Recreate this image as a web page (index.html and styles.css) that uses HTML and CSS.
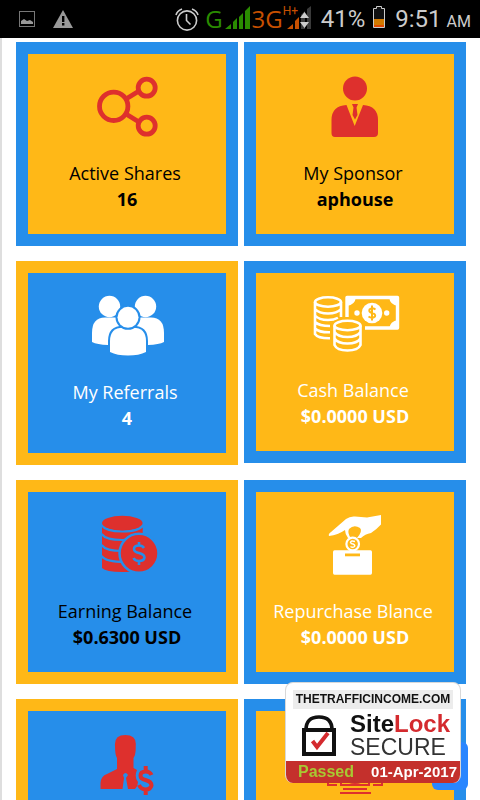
FILE: index.html
```html
<!DOCTYPE html>
<html lang="en">
	<head>
		<meta charset="UTF-8" />
		<meta name="viewport" content="width=device-width, initial-scale=1.0" />
		<title>Dashboard</title>
		<link rel="stylesheet" href="styles.css">
	</head>
	<body>
		<header class="status">
			<div class="status-left">
				<svg width="16" height="16" viewBox="0 0 16 16">
					<rect x="0.5" y="0.5" width="15" height="15" fill="none" stroke="#777" />
					<path d="M2 13V10L5 8L8 10L11 9L14 11V13Z" fill="#999" />
				</svg>
				<svg width="20" height="18" viewBox="0 0 20 18">
					<path d="M10 0L20 18H0Z" fill="#999" />
					<path d="M9 6h2.4v6H9zM9 13h2.4v2.4H9z" fill="#000" />
				</svg>
			</div>
			<div class="status-right">
				<svg class="alarm" width="24" height="23" viewBox="0 0 24 23" fill="none" stroke="#ccc" stroke-width="1.6">
					<circle cx="12" cy="12.500" r="9.600" />
					<path d="M11.500 6V12.500L15.500 16.500M1 7Q2 3 7 1M23 7Q22 3 17 1" />
				</svg>
				<span class="net green">G</span>
				<svg class="signal" width="25" height="23" viewBox="0 0 25 23" fill="#2a8c00">
					<path d="M0 23L6 18V23ZM8 16L12 12V23H8ZM14 11L18 7V23H14ZM20 5L25 0V23H20Z" />
				</svg>
				<span class="net orange">3G</span>
				<div class="hplus">
					<svg width="28" height="23" viewBox="0 0 28 23">
						<path d="M4 23L10 18V23ZM12 15L16 11V23H12Z" fill="#c85000" />
						<path d="M18 9L22 5V23H18ZM24 3L28 0V23H24Z" fill="#3a3a3a" />
						<path d="M21.500 6L26 12H17ZM17 16H26L21.500 22Z" fill="#ccc" />
					</svg>
					<span class="hplus-text">H+</span>
				</div>
				<span class="percent">41%</span>
				<svg class="battery" width="12" height="22" viewBox="0 0 12 22">
					<path d="M3.500 0.500h5v2h3v19h-11v-19h3z" fill="#111" stroke="#ccc" />
					<rect x="1" y="13" width="10" height="8" fill="#d27a00" />
					<rect x="1" y="19" width="10" height="2" fill="#e04a00" />
				</svg>
				<span class="clock">9:51</span>
				<span class="ampm">AM</span>
			</div>
		</header>

		<main class="page">
			<div class="cards">
				<section class="card gold">
					<svg class="icon" viewBox="0 0 100 62" fill="none" stroke="#de302d" stroke-width="4.800">
						<circle cx="36.700" cy="30.300" r="14.200" />
						<circle cx="69.700" cy="11.700" r="8.500" />
						<circle cx="69.700" cy="49.700" r="8.500" />
						<path d="M49 23L62 15M49 38L62 46" />
					</svg>
					<h2 class="label">Active Shares</h2>
					<p class="value">16</p>
				</section>

				<section class="card gold">
					<svg class="icon" viewBox="0 0 100 62" fill="#de302d">
						<circle cx="50" cy="12.500" r="12" />
						<path d="M41.500 29L49.700 50L58 29Q73 30 73 44V57Q73 61 69 61H30Q26.500 61 26.500 57V44Q26.500 30 41.500 29Z" />
						<path d="M47 28H53L51.500 31.500L52.500 39L50 43.500L47.500 39L48.500 31.500Z" />
					</svg>
					<h2 class="label">My Sponsor</h2>
					<p class="value">aphouse</p>
				</section>

				<section class="card blue light">
					<svg class="icon" viewBox="0 0 100 62" fill="#fff">
						<circle cx="32.500" cy="11.500" r="10.700" />
						<circle cx="68.500" cy="11.500" r="10.700" />
						<path d="M15 47V38Q15 22.500 28 22.500H38Q50 23 50 38V50H31Q20 49.500 15 47Z" />
						<path d="M87 47V38Q87 22.500 74 22.500H64Q52 23 52 38V50H71Q82 49.500 87 47Z" />
						<g stroke="#268eea" stroke-width="4" paint-order="stroke">
							<path d="M33 57V46Q33 32.700 46 32.700H56Q69 32.700 69 46V57Q62 60.500 51 60.500Q40 60.500 33 57Z" />
							<circle cx="51" cy="22.300" r="10.500" />
						</g>
					</svg>
					<h2 class="label">My Referrals</h2>
					<p class="value">4</p>
				</section>

				<section class="card gold light">
					<svg class="icon short" viewBox="0 0 100 60" fill="none" stroke="#fff" stroke-width="2.600">
						<!-- banknote -->
						<path d="M42 22V2.500H92.500V33H60" stroke-width="3.400" stroke-linejoin="round" />
						<path d="M42 2H51Q50 10 42 11ZM93 2H84Q85 10 93 11ZM93 34H84Q85 26 93 25Z" fill="#fff" stroke="none" />
						<circle cx="67" cy="18" r="10.300" fill="#fff" stroke="none" />
						<circle cx="52" cy="18" r="2.700" fill="#fff" stroke="none" />
						<circle cx="81.700" cy="18" r="2.700" fill="#fff" stroke="none" />
						<path d="M70.500 14.500Q67 12 64.500 14.500Q63.500 17 67 18Q71 19 70 21.500Q67 24 63.500 21.500M67 10.500V25.500" stroke="#ffb817" stroke-width="2" />
						<!-- coin stacks -->
						<ellipse cx="23" cy="7" rx="13" ry="4.700" />
						<path d="M10 7V39Q13 43.500 25 43.300M36 7V22M10 14Q14 18.500 23 18.500Q32 18.500 36 14M10 20.500Q14 25 23 25Q29 25 33 23M10 27Q14 31 25 31M10 33.500Q14 37.500 25 37.300" />
						<path d="M27 28Q30 23 42.500 23Q55 23 58 28V58H27Z" fill="#ffb817" stroke="none" />
						<ellipse cx="42.500" cy="30.500" rx="13" ry="4.700" />
						<path d="M29.500 30.500V50Q32 55.500 42.500 55.500Q53 55.500 55.500 50V30.500M29.500 37Q33 42 42.500 42Q52 42 55.500 37M29.500 43.500Q33 48.500 42.500 48.500Q52 48.500 55.500 43.500" />
					</svg>
					<h2 class="label">Cash Balance</h2>
					<p class="value">$0.0000 USD</p>
				</section>

				<section class="card blue">
					<svg class="icon" viewBox="0 0 100 62" fill="#de302d">
						<path d="M25 9H65.700V52Q62 58 45 58Q29 58 25 54Z" />
						<g fill="none" stroke="#268eea" stroke-width="2.200">
							<path d="M24.500 11Q29 17.500 45.300 17.500Q62 17.500 66.500 11" />
							<path d="M24.500 20Q29 26 45.300 26Q62 26 66.500 20" />
							<path d="M24.500 31Q29 37 45.300 37" />
							<path d="M24.500 42Q29 48 48 48" />
						</g>
						<path d="M24 1H67V13H24Z" fill="#268eea" />
						<ellipse cx="45.300" cy="9" rx="20.300" ry="7.200" />
						<circle cx="62" cy="39.300" r="19.500" stroke="#268eea" stroke-width="2.500" />
						<path d="M67 34Q65.500 31.500 62 31.500Q57 31.500 57 35Q57 38 62 39Q67.500 40.500 67.500 43.500Q67 47 62 47Q58 47 56.500 44M62 28V32M62 47V51" fill="none" stroke="#268eea" stroke-width="2.600" />
					</svg>
					<h2 class="label">Earning Balance</h2>
					<p class="value">$0.6300 USD</p>
				</section>

				<section class="card gold light">
					<svg class="icon" viewBox="0 0 100 62" fill="#fff">
						<path d="M24 22Q23 20 26 18L41 5Q45 2 50 2.500L62 3.500L76 1V10.500Q72 15 66 19Q60 20 56 24H52Q58 17 55 14Q49 10 44 15Q42 19 46 24H43Q40 20 40 16Q33 21 24 22Z" />
						<circle cx="47.700" cy="30" r="6.300" fill="none" stroke="#fff" stroke-width="2.200" />
						<path d="M50 27.500Q46 26 45.500 28.500Q46 30 48 30Q50.500 31 49.500 32.500Q47.500 34 45.500 32.500" fill="none" stroke="#fff" stroke-width="1.400" />
						<path d="M29.500 36.300H65.500Q67 36.300 67 38V59Q67 60.700 65.500 60.700H29.500Q28 60.700 28 59V38Q28 36.300 29.500 36.300Z" />
						<path d="M40 39.500H55V42.300H40Z" fill="#ffb817" />
					</svg>
					<h2 class="label">Repurchase Blance</h2>
					<p class="value">$0.0000 USD</p>
				</section>

				<section class="card blue">
					<svg class="icon" viewBox="0 0 100 62" fill="#de302d">
						<path d="M38 13Q37 2 48.300 2Q60 2 58.700 13Q59 22 56.500 25V35L60 37Q57 44 61 49Q61 53 58 56H51L49 45L51 42Q48.500 38 46 42L47 45L45.500 56H23.500V50Q24 43 30 41L40 36V25Q38 22 38 13Z" />
						<path d="M74.500 42Q73 38.500 68.700 38.500Q63.500 38.500 63.500 42.500Q63.500 46 68.500 47Q74.500 48.500 74.500 52.500Q73.500 56.500 68.700 56.500Q64 56.500 62 52M68.700 33V39M68.700 56V62" fill="none" stroke="#de302d" stroke-width="4" />
					</svg>
				</section>

				<section class="card gold">
					<svg class="icon" viewBox="0 0 100 62" fill="none" stroke="#de302d" stroke-width="2">
						<path d="M23 46V52H32M77 46V52H68M36 48H64V52H36ZM38 56H62M35 60H66" />
						<circle cx="50" cy="34" r="16" />
					</svg>
				</section>
			</div>
		</main>

		<button class="top-btn" type="button" aria-label="Back to top"></button>
		<a class="sitelock" href="#">
			<span class="site">THETRAFFICINCOME.COM</span>
			<span class="seal">
				<svg width="34" height="41" viewBox="0 0 34 41" fill="none">
					<path d="M4 15Q4 2 17 2Q30 2 30 15" stroke="#111" stroke-width="3.600" />
					<rect x="2" y="15" width="30" height="24" stroke="#111" stroke-width="4" />
					<path d="M10.500 26L15 32L26 18" stroke="#d42a2e" stroke-width="4" />
				</svg>
				<span class="words">
					<span class="brand">Site<b class="lock">Lock</b></span>
					<span class="secure">SECURE</span>
				</span>
			</span>
			<span class="result">
				<span class="passed">Passed</span>
				<span class="date">01-Apr-2017</span>
			</span>
		</a>
	</body>
</html>
```
FILE: styles.css
```css
* {
	margin: 0;
	padding: 0;
	box-sizing: border-box;
}
body {
	display: flex;
	flex-direction: column;
	height: 100vh;
	overflow: hidden;
	background-color: #fff;
	font-family: "Open Sans", "Noto Sans", sans-serif;
}
svg {
	display: block;
	flex: none;
}

/* status bar */
.status {
	flex: none;
	display: flex;
	justify-content: space-between;
	height: 38px;
	padding: 0 9px 0 19px;
	background-color: #000;
	color: #ccc;
	font-family: Roboto, sans-serif;
	font-size: 24px;
	line-height: 40px;
}
.status-left {
	display: flex;
	align-items: center;
	gap: 18px;
}
.status-right {
	display: flex;
	align-items: center;
}
.alarm {
	margin-right: 6px;
}
.net {
	font-family: "Open Sans", sans-serif;
	line-height: 36px;
}
.green {
	color: #2a8c00;
}
.orange {
	color: #c85000;
}
.signal {
	margin: 0 2px 4px 2px;
}
.hplus {
	position: relative;
	margin: 0 10px 4px 0;
}
.hplus-text {
	position: absolute;
	top: -1px;
	left: 0;
	color: #c85000;
	font-size: 12px;
	line-height: 12px;
}
.battery {
	margin: 0 10px 4px 8px;
}
.ampm {
	margin-left: 5px;
	padding-top: 6px;
	font-size: 16px;
	line-height: 32px;
}

/* cards */
.page {
	flex: 1;
	min-height: 0;
	overflow: hidden;
	border-left: 2px solid #dedede;
	padding: 4px 14px;
}
.cards {
	display: grid;
	grid-template-columns: 1fr 1fr;
	align-items: start;
	gap: 15px 6px;
}
.card {
	border: 12px solid;
	padding: 22px 0;
	color: #000;
	font-size: 18px;
	line-height: 26px;
	text-align: center;
}
.gold {
	background-color: #ffb817;
	border-color: #268eea;
}
.blue {
	background-color: #268eea;
	border-color: #ffb817;
}
.light {
	color: #fff;
}
.icon {
	width: 100px;
	height: 62px;
	margin: 0 auto 22px;
}
.icon.short {
	height: 60px;
}
.label {
	padding-right: 4px;
	font-size: 18px;
	font-weight: 400;
}
.value {
	font-weight: 700;
}

/* floating items */
.top-btn {
	position: fixed;
	right: 12px;
	bottom: 10px;
	width: 36px;
	height: 48px;
	border: 0;
	border-radius: 6px;
	background-color: #2a86ff;
}
.sitelock {
	position: fixed;
	right: 19px;
	bottom: 17px;
	width: 176px;
	overflow: hidden;
	border: 1px solid #d8d8d8;
	border-bottom: 0;
	border-radius: 8px;
	background-color: #fff;
	color: #111;
	font-family: "Liberation Sans", Arial, sans-serif;
	text-decoration: none;
}
.site {
	display: block;
	margin: 7px 7px 0;
	background-color: #ececec;
	font-size: 12px;
	font-weight: 700;
	line-height: 19px;
	text-align: center;
}
.seal {
	display: flex;
	align-items: center;
	gap: 14px;
	height: 52px;
	padding-left: 16px;
}
.words {
	display: flex;
	flex-direction: column;
}
.brand {
	font-size: 24px;
	font-weight: 700;
	line-height: 24px;
}
.lock {
	color: #d42a2e;
}
.secure {
	color: #333;
	font-size: 23px;
	line-height: 22px;
}
.result {
	display: flex;
	justify-content: space-between;
	padding: 0 3px 0 12px;
	background-color: #c4302c;
	font-size: 15px;
	font-weight: 700;
	line-height: 22px;
}
.passed {
	color: #a8c832;
	font-size: 16px;
}
.date {
	color: #fff;
}
```
